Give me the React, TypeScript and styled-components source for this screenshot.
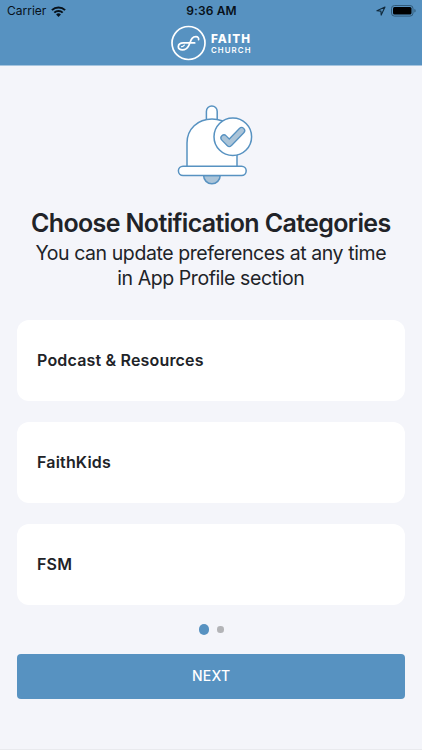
import React from 'react';
import styled, { createGlobalStyle } from 'styled-components';

const GlobalStyle = createGlobalStyle`
  * { box-sizing: border-box; }
  body { margin: 0; background: #f4f5fa; font-family: Inter, 'Liberation Sans', sans-serif; }
`;

const Screen = styled.div`
  width: 422px;
  height: 750px;
  overflow: hidden;
  display: flex;
  flex-direction: column;
  background: #f4f5fa;
  color: #212328;
`;

const Header = styled.header`
  flex: none;
  height: 66px;
  background: #5792c1;
  border-bottom: 1px solid #a6c5df;
`;

const StatusBar = styled.div`
  height: 22px;
  padding: 0 6px 0 7px;
  display: grid;
  grid-template-columns: 1fr auto 1fr;
  align-items: center;
  color: #07111a;
  line-height: 22px;
`;

const Carrier = styled.div`
  display: flex;
  align-items: center;
  gap: 5px;
  font-size: 12px;
`;

const Clock = styled.div`
  font-size: 12px;
  font-weight: 600;
  letter-spacing: 0.15px;
`;

const StatusIcons = styled.div`
  display: flex;
  justify-content: flex-end;
  align-items: center;
  gap: 5px;
`;

const Brand = styled.div`
  height: 43px;
  padding: 3px 0 0 171px;
  display: flex;
  align-items: flex-start;
  gap: 5px;
  color: #fff;
`;

const BrandName = styled.div`
  padding-top: 7px;
  white-space: nowrap;
`;

const BrandTop = styled.div`
  font-size: 11.7px;
  line-height: 14px;
  font-weight: 800;
  letter-spacing: 1.05px;
`;

const BrandBottom = styled.div`
  font-size: 7.8px;
  line-height: 9px;
  font-weight: 600;
  letter-spacing: 1.1px;
`;

const Main = styled.main`
  flex: 1;
  padding: 36px 17px 0 16.5px;
  display: flex;
  flex-direction: column;
`;

const Intro = styled.section`
  height: 218px;
  display: flex;
  flex-direction: column;
  align-items: center;
  text-align: center;
  white-space: nowrap;
`;

const Bell = styled.svg`
  display: block;
  flex: none;
  margin-left: 8px;
`;

const Title = styled.h1`
  margin: 20px 0 0;
  font-size: 25px;
  line-height: 32px;
  font-weight: 600;
  letter-spacing: -0.63px;
`;

const Subtitle = styled.p`
  margin: 2px 0 0;
  font-size: 19.5px;
  line-height: 24.5px;
  letter-spacing: -0.42px;
`;

const CategoryList = styled.div`
  display: flex;
  flex-direction: column;
  gap: 20.5px;
`;

const Category = styled.div`
  height: 81.3px;
  padding: 0 20.5px 1px;
  display: flex;
  align-items: center;
  border-radius: 12px;
  background: #fff;
  font-size: 16px;
  font-weight: 600;
  letter-spacing: 0.18px;
`;

const Pager = styled.div`
  height: 49px;
  padding-left: 1px;
  display: flex;
  justify-content: center;
  align-items: center;
  gap: 8px;
`;

const Dot = styled.span<{ $active?: boolean }>`
  width: ${({ $active }) => ($active ? 10.5 : 6.5)}px;
  height: ${({ $active }) => ($active ? 10.5 : 6.5)}px;
  border-radius: 50%;
  background: ${({ $active }) => ($active ? '#5792c1' : '#b3b4b7')};
`;

const NextButton = styled.button`
  height: 45px;
  flex: none;
  padding: 0 0 1px 1px;
  border: 0;
  border-radius: 4px;
  background: #5792c1;
  color: #fff;
  font: 500 14px Inter, sans-serif;
  letter-spacing: 0.3px;
`;

const BottomEdge = styled.footer`
  flex: none;
  height: 1px;
  background: #e9eaee;
`;

const WifiIcon = () => (
  <svg width="15" height="11" viewBox="0 0 15 11" fill="none" stroke="#07111a">
    <path d="M.9 4.1a9.4 9.4 0 0 1 13.2 0M3.3 6.6a6 6 0 0 1 8.4 0" strokeWidth="2" />
    <path d="M7.5 10.9 5.1 8.5a3.4 3.4 0 0 1 4.8 0Z" fill="#07111a" stroke="none" />
  </svg>
);

const LocationIcon = () => (
  <svg width="10" height="10" viewBox="0 0 10 10" fill="none" stroke="#102a3d" strokeWidth="1.1" strokeLinejoin="round">
    <path d="M.9 4.8 9 1 5.2 9.1 4.9 5.1Z" />
  </svg>
);

const BatteryIcon = () => (
  <svg width="25" height="12" viewBox="0 0 25 12">
    <rect x=".5" y=".5" width="21.5" height="10.6" rx="3" fill="none" stroke="#315a79" />
    <rect x="2" y="2" width="18.5" height="7.6" rx="1.5" fill="#000" />
    <path d="M23.4 4q1.2.3 1.2 1.8t-1.2 1.8Z" fill="#315a79" />
  </svg>
);

const LogoMark = () => (
  <svg width="35" height="36" viewBox="0 0 35 36" fill="none" stroke="#fff" strokeLinecap="round">
    <circle cx="17.5" cy="18" r="16.5" strokeWidth="1.7" />
    <path d="M27.6 14.6c.3-1.8-.8-2.9-2.6-2.9-5.2 0-5 4.8-7.4 9.2-1.4 2.6-3.6 4-6.1 4-2.5 0-4.3-1.4-4.2-3.2.1-2.4 2.2-3.8 5.2-3.8h11.2" strokeWidth="1.7" />
    <path d="M10.6 21.6c1.1.2 1.8-.4 2.7-1.5" strokeWidth="1.3" />
  </svg>
);

const BellArt = () => (
  <Bell width="76" height="85" viewBox="177 102 76 85" fill="#fff" stroke="#5792c1" strokeWidth="1.5">
    <path d="M206.4 121v-9.6a5.4 5.4 0 0 1 10.8 0V121" />
    <path d="M187 167v-24c0-14 10.8-24 25-24s25 10 25 24v24" />
    <path d="M203.6 175.5a8.3 8.3 0 0 0 16.6 0Z" fill="#abc4d8" />
    <rect x="178.4" y="166.2" width="67.8" height="9.3" rx="4.65" />
    <circle cx="232.8" cy="136.7" r="18.8" />
    <path d="m224 138 5.3 5.4 12.3-12.8" fill="none" strokeWidth="7.4" strokeLinecap="round" strokeLinejoin="round" />
    <path d="m224 138 5.3 5.4 12.3-12.8" fill="none" stroke="#abc4d8" strokeWidth="4.8" strokeLinecap="round" strokeLinejoin="round" />
  </Bell>
);

const categories = ['Podcast & Resources', 'FaithKids', 'FSM'];

export default function App() {
  return (
    <>
      <GlobalStyle />
      <Screen>
        <Header>
          <StatusBar>
            <Carrier>Carrier <WifiIcon /></Carrier>
            <Clock>9:36 AM</Clock>
            <StatusIcons><LocationIcon /><BatteryIcon /></StatusIcons>
          </StatusBar>
          <Brand>
            <LogoMark />
            <BrandName>
              <BrandTop>FAITH</BrandTop>
              <BrandBottom>CHURCH</BrandBottom>
            </BrandName>
          </Brand>
        </Header>
        <Main>
          <Intro>
            <BellArt />
            <Title>Choose Notification Categories</Title>
            <Subtitle>You can update preferences at any time<br />in App Profile section</Subtitle>
          </Intro>
          <CategoryList>
            {categories.map((name) => <Category key={name}>{name}</Category>)}
          </CategoryList>
          <Pager><Dot $active /><Dot /></Pager>
          <NextButton>NEXT</NextButton>
        </Main>
        <BottomEdge />
      </Screen>
    </>
  );
}
